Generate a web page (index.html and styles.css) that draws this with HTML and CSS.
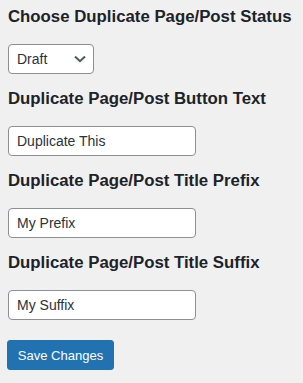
FILE: index.html
```html
<!DOCTYPE html>
<html>
<head>
<meta charset="utf-8">
<link rel="stylesheet" href="styles.css">
</head>
<body>
<form class="settings">
  <section class="field">
    <h3 class="label">Choose Duplicate Page/Post Status</h3>
    <div class="select">
      <span class="select-value">Draft</span>
      <svg class="chevron" width="12" height="8" viewBox="0 0 12 8"><path d="M1 1.5 L6 6.2 L11 1.5" fill="none" stroke="#50575e" stroke-width="2"/></svg>
    </div>
  </section>
  <section class="field">
    <h3 class="label">Duplicate Page/Post Button Text</h3>
    <div class="input">Duplicate This</div>
  </section>
  <section class="field">
    <h3 class="label">Duplicate Page/Post Title Prefix</h3>
    <div class="input">My Prefix</div>
  </section>
  <section class="field">
    <h3 class="label">Duplicate Page/Post Title Suffix</h3>
    <div class="input">My Suffix</div>
  </section>
  <div class="actions">
    <button type="button" class="button-primary">Save Changes</button>
  </div>
</form>
</body>
</html>
```
FILE: styles.css
```css
html, body {
  margin: 0;
  padding: 0;
  background: #f0f0f1;
}
body {
  font-family: "Liberation Sans", Arial, sans-serif;
  color: #1d2327;
  padding: 0 8px;
}
.settings {
  display: flex;
  flex-direction: column;
}
.field {
  height: 82px;
  display: flex;
  flex-direction: column;
}
.label {
  margin: 0;
  padding-top: 6px;
  font-size: 16.8px;
  line-height: 22px;
  font-weight: bold;
  color: #1d2327;
  white-space: nowrap;
}
.select, .input {
  box-sizing: border-box;
  height: 30px;
  margin-top: 16px;
  border: 1px solid #8c8f94;
  border-radius: 4px;
  background: #fff;
  color: #2c3338;
  font-size: 14px;
  display: flex;
  align-items: center;
  padding: 0 8px;
}
.select {
  width: 86px;
  justify-content: space-between;
  padding-right: 7px;
}
.input {
  width: 188px;
}
.chevron {
  display: block;
}
.actions {
  padding-top: 12px;
}
.button-primary {
  box-sizing: border-box;
  height: 30px;
  width: 107px;
  margin-left: -1px;
  border: 1px solid #2271b1;
  border-radius: 3px;
  background: #2271b1;
  color: #fff;
  font-family: "Liberation Sans", Arial, sans-serif;
  font-size: 13px;
  padding: 0;
  white-space: nowrap;
}
```
